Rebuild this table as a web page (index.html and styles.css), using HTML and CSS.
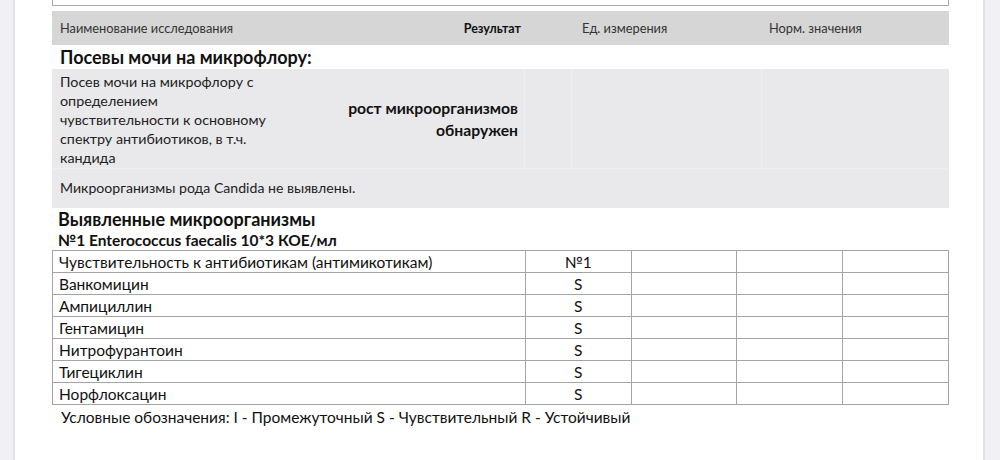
FILE: index.html
```html
<!DOCTYPE html>
<html lang="ru">
<head>
<meta charset="utf-8">
<link rel="stylesheet" href="styles.css">
</head>
<body>
<div class="page">
  <div class="side side-left"></div>
  <main class="content">
    <div class="topbox"></div>
    <div class="res-head">
      <div class="c-name">Наименование исследования</div>
      <div class="c-res">Результат</div>
      <div class="c-gap"></div>
      <div class="c-unit">Ед. измерения</div>
      <div class="c-norm">Норм. значения</div>
    </div>
    <h2 class="sec-title">Посевы мочи на микрофлору:</h2>
    <div class="res-row">
      <div class="c-name">Посев мочи на микрофлору с<br>определением<br>чувствительности к основному<br>спектру антибиотиков, в т.ч.<br>кандида</div>
      <div class="c-res"><b>рост микроорганизмов<br>обнаружен</b></div>
      <div class="c-gap"></div>
      <div class="c-unit"></div>
      <div class="c-norm"></div>
    </div>
    <div class="res-note">Микроорганизмы рода Candida не выявлены.</div>
    <h2 class="found-title">Выявленные микроорганизмы</h2>
    <h3 class="org-title">№1 Enterococcus faecalis 10*3 КОЕ/мл</h3>
    <table class="abx">
      <tr><td class="ab-name">Чувствительность к антибиотикам (антимикотикам)</td><td class="ab-val">№1</td><td></td><td></td><td></td></tr>
      <tr><td class="ab-name">Ванкомицин</td><td class="ab-val">S</td><td></td><td></td><td></td></tr>
      <tr><td class="ab-name">Ампициллин</td><td class="ab-val">S</td><td></td><td></td><td></td></tr>
      <tr><td class="ab-name">Гентамицин</td><td class="ab-val">S</td><td></td><td></td><td></td></tr>
      <tr><td class="ab-name">Нитрофурантоин</td><td class="ab-val">S</td><td></td><td></td><td></td></tr>
      <tr><td class="ab-name">Тигециклин</td><td class="ab-val">S</td><td></td><td></td><td></td></tr>
      <tr><td class="ab-name">Норфлоксацин</td><td class="ab-val">S</td><td></td><td></td><td></td></tr>
    </table>
    <p class="legend">Условные обозначения: I - Промежуточный S - Чувствительный R - Устойчивый</p>
  </main>
  <div class="side side-right"></div>
</div>
</body>
</html>
```

FILE: styles.css
```css
* { box-sizing: border-box; }
html, body { margin: 0; padding: 0; background: #fff; }
body {
  font-family: Lato, "Noto Sans", "DejaVu Sans", sans-serif;
  color: #1a1a1a;
  width: 1000px;
  height: 460px;
  overflow: hidden;
}
.page {
  display: flex;
  height: 460px;
}
.side {
  background: #f1f1f5;
  flex: none;
}
.side-left {
  width: 15px;
  border-right: 2px solid #e1e1e6;
}
.side-right {
  width: 17px;
  margin-left: auto;
  border-left: 2px solid #e1e1e6;
}
.content {
  width: 897px;
  margin-left: 37px;
  flex: none;
}
.topbox {
  height: 6px;
  border: 1.5px solid #a8a8a8;
  border-top: 0;
}
.res-head, .res-row {
  display: grid;
  grid-template-columns: 240px 233px 47px 190px 187px;
}
.res-head {
  margin-top: 5px;
  height: 34px;
  background: #d6d6d6;
  font-size: 12.8px;
  color: #333;
  align-items: center;
}
.res-head > div { padding: 0 8px; }
.res-head .c-res { text-align: right; font-weight: 700; color: #111; padding-right: 4px; font-size: 12.5px; }
.res-head .c-unit { padding-left: 10px; }
.res-head .c-norm { padding-left: 7px; }
.sec-title {
  margin: 0;
  height: 24px;
  padding-left: 8px;
  font-size: 18px;
  font-weight: 700;
  line-height: 24px;
  color: #111;
}
.res-row {
  background: #e9e9eb;
  height: 100px;
  border-bottom: 1px solid #efeff1;
}
.res-row > div {
  border-right: 1px solid #efeff1;
}
.res-row > div:last-child { border-right: 0; }
.res-row .c-name {
  padding: 3px 8px 0;
  font-size: 14.3px;
  line-height: 19px;
  color: #222;
  border-right: 0;
  white-space: nowrap;
}
.res-row .c-res {
  display: flex;
  align-items: center;
  justify-content: flex-end;
  text-align: right;
  padding: 0 6px 0 0;
  font-size: 15.7px;
  line-height: 22px;
  color: #111;
  white-space: nowrap;
}
.res-note {
  background: #e9e9eb;
  height: 39px;
  padding-left: 8px;
  font-size: 14.1px;
  line-height: 38px;
  color: #222;
}
.found-title {
  margin: 0;
  padding-left: 6px;
  height: 22px;
  font-size: 18px;
  line-height: 22px;
  font-weight: 700;
  color: #111;
}
.org-title {
  margin: 0;
  padding-left: 6px;
  height: 20px;
  font-size: 15.5px;
  line-height: 20px;
  font-weight: 700;
  color: #111;
}
.abx {
  width: 897px;
  border-collapse: collapse;
  border: 1.5px solid #a4a4a4;
  font-size: 15.5px;
  color: #111;
}
.abx td {
  border: 1px solid #a4a4a4;
  height: 22px;
  padding: 0 0 0 6px;
  line-height: 20px;
  width: 106px;
  white-space: nowrap;
}
.abx td.ab-name { width: 473px; }
.abx td.ab-val { text-align: center; padding: 0; }
.legend {
  margin: 0;
  padding: 1px 0 0 9px;
  font-size: 15.5px;
  line-height: 22px;
  color: #111;
}
```
